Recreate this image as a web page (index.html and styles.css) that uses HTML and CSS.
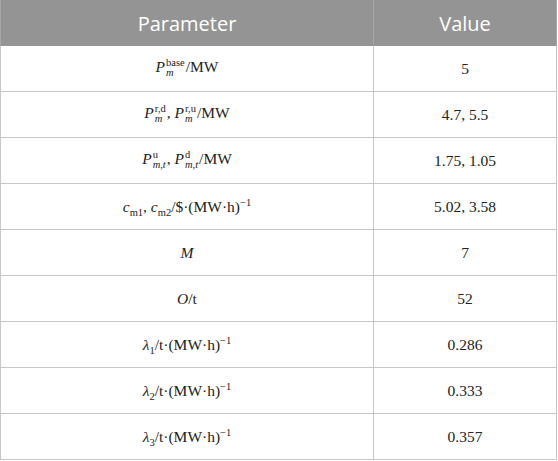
FILE: index.html
```html
<!DOCTYPE html>
<html>
<head>
<meta charset="utf-8">
<link rel="stylesheet" href="styles.css">
</head>
<body>
<table class="params">
  <thead>
    <tr><th class="c1">Parameter</th><th class="c2">Value</th></tr>
  </thead>
  <tbody>
    <tr><td><span class="v">P</span><span class="ss"><span class="up">base</span><span class="dn it">m</span></span>/MW</td><td>5</td></tr>
    <tr><td><span class="v">P</span><span class="ss"><span class="up">r,d</span><span class="dn it">m</span></span>, <span class="v">P</span><span class="ss"><span class="up">r,u</span><span class="dn it">m</span></span>/MW</td><td>4.7, 5.5</td></tr>
    <tr><td><span class="v">P</span><span class="ss"><span class="up">u</span><span class="dn it">m,t</span></span>, <span class="v">P</span><span class="ss"><span class="up">d</span><span class="dn it">m,t</span></span>/MW</td><td>1.75, 1.05</td></tr>
    <tr><td><span class="v">c</span><sub>m1</sub>, <span class="v">c</span><sub>m2</sub>/$·(MW·h)<sup>−1</sup></td><td>5.02, 3.58</td></tr>
    <tr><td><span class="v">M</span></td><td>7</td></tr>
    <tr><td><span class="v">O</span>/t</td><td>52</td></tr>
    <tr><td><span class="v">λ</span><sub>1</sub>/t·(MW·h)<sup>−1</sup></td><td>0.286</td></tr>
    <tr><td><span class="v">λ</span><sub>2</sub>/t·(MW·h)<sup>−1</sup></td><td>0.333</td></tr>
    <tr><td><span class="v">λ</span><sub>3</sub>/t·(MW·h)<sup>−1</sup></td><td>0.357</td></tr>
  </tbody>
</table>
</body>
</html>
```

FILE: styles.css
```css
html, body {
  margin: 0;
  padding: 0;
  background: #ffffff;
}

.params {
  border-collapse: collapse;
  width: 557px;
  table-layout: fixed;
}

.params th {
  background: #949494;
  color: #ffffff;
  font-family: "Open Sans", "Noto Sans", sans-serif;
  font-weight: 400;
  font-size: 20px;
  height: 46px;
  padding: 0;
  text-align: center;
  vertical-align: middle;
  border-left: 1px solid #a6a6a6;
  border-right: 1px solid #a6a6a6;
}

.params th.c1 {
  width: 372px;
}

.params td {
  height: 45px;
  padding: 0;
  text-align: center;
  vertical-align: middle;
  font-family: "Liberation Serif", "Times New Roman", serif;
  font-size: 15.5px;
  color: #222222;
  border: 1px solid #c6c6c6;
}

.params tbody tr:first-child td {
  border-top: none;
}

.v, .it {
  font-style: italic;
}

.ss {
  display: inline-flex;
  flex-direction: column;
  vertical-align: middle;
  font-size: 10.5px;
  line-height: 10px;
  text-align: left;
  margin-left: 1px;
  margin-right: 1px;
  position: relative;
  top: -1px;
}

.ss .up {
  display: block;
}

.ss .dn {
  display: block;
}

sub, sup {
  font-size: 10.5px;
  line-height: 0;
}
```
